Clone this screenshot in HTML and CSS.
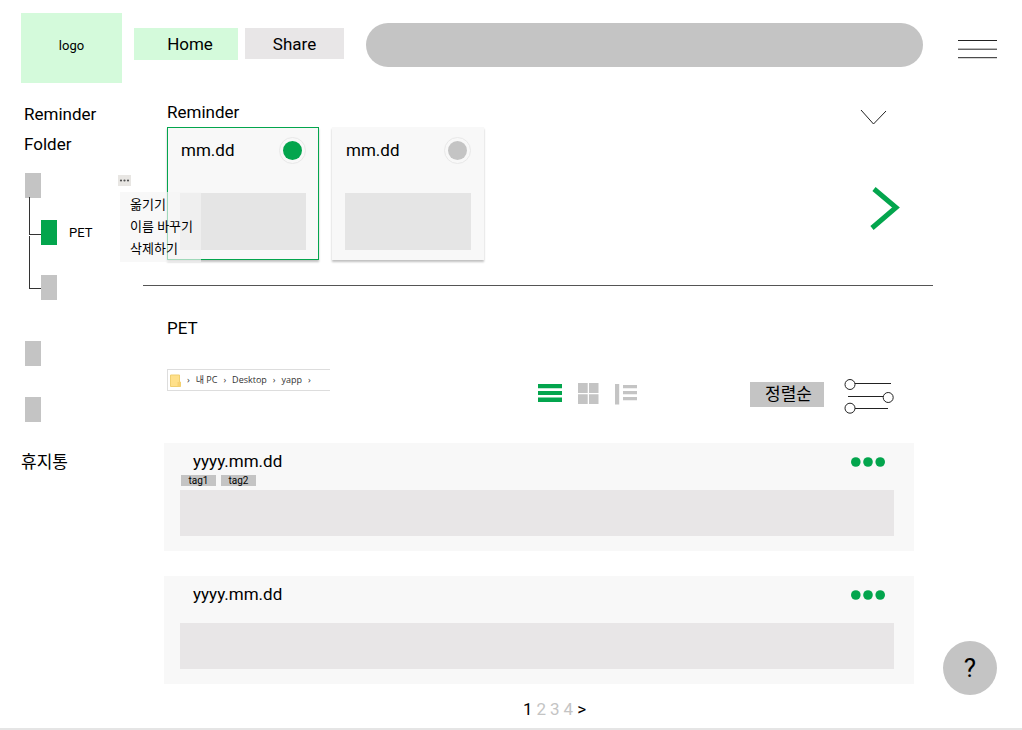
FILE: index.html
```
<!DOCTYPE html>
<html lang="ko">
<head>
    <meta charset="UTF-8">
    <meta name="viewport" content="width=device-width, initial-scale=1.0">
    <title>Reminder</title>
    <link rel="stylesheet" href="styles.css">
</head>
<body>
    <header class="header">
        <a class="logo" href="#">logo</a>
        <nav class="tabs">
            <a class="tab active" href="#">Home</a>
            <a class="tab" href="#">Share</a>
        </nav>
        <input class="search" type="search" aria-label="Search">
        <button class="menu-button" aria-label="Menu">
            <svg width="39" height="19" viewBox="0 0 39 19" stroke="#222" stroke-width="1">
                <path d="M0 .5H39M0 9.2H39M0 17.7H39"/>
            </svg>
        </button>
    </header>

    <div class="layout">
        <!-- Sidebar -->
        <aside class="sidebar">
            <a class="side-link" href="#">Reminder</a>
            <a class="side-link" href="#">Folder</a>
            <ul class="tree">
                <li class="root">
                    <div class="folder-row">
                        <span class="folder"></span>
                        <button class="more" aria-label="More">
                            <svg width="13" height="11" viewBox="0 0 13 11" fill="#555">
                                <circle cx="3" cy="5.5" r="1.1"/><circle cx="6.5" cy="5.5" r="1.1"/><circle cx="10" cy="5.5" r="1.1"/>
                            </svg>
                        </button>
                        <div class="popup">
                            <button class="popup-item">옮기기</button>
                            <button class="popup-item">이름 바꾸기</button>
                            <button class="popup-item">삭제하기</button>
                        </div>
                    </div>
                    <ul class="children">
                        <li class="child"><span class="folder green"></span>PET</li>
                        <li class="child"><span class="folder"></span></li>
                    </ul>
                </li>
                <li class="root"><span class="folder"></span></li>
                <li class="root"><span class="folder"></span></li>
            </ul>
            <a class="trash" href="#">휴지통</a>
        </aside>

        <main class="main">
            <section class="reminders">
                <div class="section-head">
                    <h2 class="title">Reminder</h2>
                    <button class="fold" aria-label="Fold">
                        <svg width="27" height="16" viewBox="0 0 27 16" fill="none" stroke="#222">
                            <path d="M1 1L13.5 15L26 2"/>
                        </svg>
                    </button>
                </div>
                <div class="cards">
                    <article class="card selected">
                        <div class="card-head">
                            <h3 class="title">mm.dd</h3>
                            <input class="check" type="radio" name="card" aria-label="mm.dd" checked>
                        </div>
                        <div class="card-box"></div>
                    </article>
                    <article class="card">
                        <div class="card-head">
                            <h3 class="title">mm.dd</h3>
                            <input class="check" type="radio" name="card" aria-label="mm.dd">
                        </div>
                        <div class="card-box"></div>
                    </article>
                    <button class="next" aria-label="Next">
                        <svg width="30" height="44" viewBox="0 0 30 44" fill="none" stroke="#03a54d" stroke-width="5">
                            <path d="M4 3L26 21.5L2 42"/>
                        </svg>
                    </button>
                </div>
            </section>

            <section>
                <h2 class="title folder-title">PET</h2>
                <div class="toolbar">
                    <nav class="path" aria-label="Path">
                        <svg width="11" height="13" viewBox="0 0 11 13">
                            <path d="M.5 1H9.5V8H10.5V12.5H.5Z" fill="#ffe08a" stroke="#f0cf70"/>
                            <path d="M7.5 8H10.5V12.5H7.5Z" fill="#f7d273"/>
                        </svg>
                        <span class="sep">›</span><a href="#">내 PC</a>
                        <span class="sep">›</span><a href="#">Desktop</a>
                        <span class="sep">›</span><a href="#">yapp</a>
                        <span class="sep">›</span>
                    </nav>
                    <div class="views">
                        <button aria-label="List">
                            <svg width="24" height="22" viewBox="0 0 24 22" fill="#03a54d">
                                <path d="M0 1H24V5.3H0ZM0 8H24V12H0ZM0 14.5H24V19H0Z"/>
                            </svg>
                        </button>
                        <button aria-label="Grid">
                            <svg width="21" height="22" viewBox="0 0 21 22" fill="#c4c4c4">
                                <path d="M0 0H9.7V10H0ZM11 0H20.5V10H11ZM0 11.3H9.7V21H0ZM11 11.3H20.5V21H11Z"/>
                            </svg>
                        </button>
                        <button aria-label="Timeline">
                            <svg width="22" height="22" viewBox="0 0 22 22" fill="#c4c4c4">
                                <path d="M0 1H4.2V21.5H0ZM8 2H22V5.2H8ZM8 8H22V11.2H8ZM8 14H22V17.2H8Z"/>
                            </svg>
                        </button>
                    </div>
                    <select class="sort" aria-label="정렬">
                        <option>정렬순</option>
                    </select>
                    <button class="filter" aria-label="Filter">
                        <svg width="50" height="36" viewBox="0 0 50 36" fill="none" stroke="#222">
                            <path d="M11 5.5H47M4 18.5H39M11 30.5H44"/>
                            <circle cx="6" cy="6.5" r="5"/>
                            <circle cx="44.2" cy="19.5" r="5"/>
                            <circle cx="6" cy="30.2" r="5"/>
                        </svg>
                    </button>
                </div>

                <div class="list">
                    <article class="item">
                        <div class="item-head">
                            <h3 class="title">yyyy.mm.dd</h3>
                            <button class="dots" aria-label="More">
                                <svg width="34" height="10" viewBox="0 0 34 10" fill="#03a54d">
                                    <circle cx="4.8" cy="5" r="4.8"/><circle cx="17" cy="5" r="4.8"/><circle cx="29.2" cy="5" r="4.8"/>
                                </svg>
                            </button>
                        </div>
                        <div class="tags">
                            <span class="tag">tag1</span>
                            <span class="tag">tag2</span>
                        </div>
                        <div class="item-box"></div>
                    </article>
                    <article class="item">
                        <div class="item-head">
                            <h3 class="title">yyyy.mm.dd</h3>
                            <button class="dots" aria-label="More">
                                <svg width="34" height="10" viewBox="0 0 34 10" fill="#03a54d">
                                    <circle cx="4.8" cy="5" r="4.8"/><circle cx="17" cy="5" r="4.8"/><circle cx="29.2" cy="5" r="4.8"/>
                                </svg>
                            </button>
                        </div>
                        <div class="tags"></div>
                        <div class="item-box"></div>
                    </article>
                </div>

                <nav class="pages" aria-label="Pages">
                    <a class="current" href="#">1</a>
                    <a href="#">2</a>
                    <a href="#">3</a>
                    <a href="#">4</a>
                    <a class="current" href="#">&gt;</a>
                </nav>
            </section>
        </main>
    </div>

    <button class="help">?</button>
</body>
</html>
```
FILE: styles.css
```
* {
    box-sizing: border-box;
}
body {
    margin: 0;
    min-height: 100vh;
    background-color: #fff;
    border-bottom: 2px solid #e5e5e5;
    color: #000;
    font-family: Roboto, "Noto Sans CJK KR", sans-serif;
    font-size: 17px;
    line-height: 20px;
}
a {
    color: inherit;
    text-decoration: none;
}
button {
    padding: 0;
    border: none;
    background: none;
    color: inherit;
    font: inherit;
    cursor: pointer;
}
svg {
    display: block;
}
ul {
    margin: 0;
    padding: 0;
    list-style: none;
}
.title {
    margin: 0;
    font-size: 17px;
    font-weight: 400;
}

/* Header */
.header {
    display: flex;
    align-items: flex-start;
    padding: 13px 25px 0 21px;
}
.logo {
    display: flex;
    align-items: center;
    justify-content: center;
    width: 101px;
    height: 70px;
    padding-bottom: 5px;
    background-color: #d4fadb;
    font-size: 13px;
}
.tabs {
    display: flex;
    align-items: flex-start;
    gap: 7px;
    margin: 15px 22px 0 12px;
}
.tab {
    width: 99px;
    height: 31px;
    background-color: #e8e6e7;
    line-height: 32px;
    text-align: center;
}
.tab.active {
    width: 104px;
    height: 32px;
    padding-left: 8px;
    background-color: #d4fadb;
}
.search {
    flex: 1;
    min-width: 0;
    height: 44px;
    margin-top: 10px;
    padding: 0 22px;
    border: none;
    border-radius: 22px;
    background-color: #c4c4c4;
    font: inherit;
}
.menu-button {
    margin: 27px 0 0 35px;
}

.layout {
    display: flex;
}

/* Sidebar */
.sidebar {
    width: 143px;
    padding: 21px 12px 0 24px;
}
.side-link {
    display: block;
    margin-bottom: 10px;
}
.folder {
    display: block;
    width: 16px;
    height: 25px;
    background-color: #c4c4c4;
}
.folder.green {
    background-color: #03a54d;
}
.tree {
    display: flex;
    flex-direction: column;
    gap: 31px;
    padding: 9px 0 30px 1px;
}
.folder-row {
    position: relative;
    display: flex;
    justify-content: space-between;
    align-items: flex-start;
}
.more {
    margin-top: 2px;
    background-color: #e8e6e3;
}
.popup {
    position: absolute;
    top: 19px;
    left: 95px;
    z-index: 1;
    display: flex;
    flex-direction: column;
    align-items: flex-start;
    width: 81px;
    padding: 2px 10px;
    background-color: rgba(245, 245, 245, 0.65);
}
.popup-item {
    font-size: 13px;
    line-height: 22px;
    white-space: nowrap;
}
.children {
    padding: 0 0 10px 16px;
}
.child {
    position: relative;
    display: flex;
    align-items: center;
    gap: 12px;
    height: 25px;
    margin-top: 22px;
    font-size: 13px;
}
.child + .child {
    margin-top: 30px;
}
/* elbow line from the parent folder */
.child::before {
    content: "";
    position: absolute;
    left: -12px;
    bottom: 10px;
    width: 11px;
    height: 37px;
    border-left: 1px solid #333;
    border-bottom: 1px solid #333;
}
.child + .child::before {
    bottom: 11px;
    height: 52px;
}
.trash {
    margin-left: -3px;
}

/* Reminder */
.main {
    flex: 1;
    min-width: 0;
    margin-right: 89px;
}
.reminders {
    padding: 19px 0 25px 24px;
    border-bottom: 1px solid #555;
}
.section-head {
    display: flex;
    justify-content: space-between;
    align-items: flex-end;
    height: 20px;
    padding-right: 46px;
}
.fold {
    align-self: center;
    padding-top: 10px;
}
.cards {
    display: flex;
    gap: 13px;
    margin-top: 5px;
    padding-right: 33px;
}
.card {
    width: 152px;
    padding: 9px 12px;
    border: 1px solid #f8f8f8;
    background-color: #f8f8f8;
    box-shadow: 0 2px 2px rgba(0, 0, 0, 0.25);
}
.card.selected {
    border-color: #03a54d;
}
.card-head {
    display: flex;
    justify-content: space-between;
    align-items: center;
    padding-left: 1px;
}
.card .title {
    padding-bottom: 2px;
}
.check {
    appearance: none;
    width: 27px;
    height: 27px;
    margin: 0;
    border: 1px solid #e8e8e8;
    border-radius: 50%;
    padding: 3px;
    background-color: #c4c4c4;
    background-clip: content-box;
}
.check:checked {
    background-color: #03a54d;
}
.card-box {
    height: 57px;
    margin-top: 29px;
    background-color: #e5e5e5;
}
.next {
    align-self: flex-start;
    margin: 59px 0 0 auto;
}

/* Folder content */
.folder-title {
    margin: 32px 24px 31px;
}
.toolbar {
    display: flex;
    align-items: flex-start;
    padding: 0 39px 0 24px;
}
.path {
    display: flex;
    align-items: center;
    gap: 6px;
    width: 163px;
    height: 22px;
    padding-left: 2px;
    border: 1px solid #ddd;
    border-right: none;
    color: #333;
    font-family: "Open Sans", "Noto Sans CJK KR", sans-serif;
    font-size: 9px;
}
.views {
    display: flex;
    gap: 16px;
    margin: 14px 113px 0 auto;
}
.sort {
    appearance: none;
    width: 74px;
    height: 25px;
    margin: 13px 20px 0 0;
    padding: 0 0 2px 15px;
    border: none;
    border-radius: 0;
    background-color: #c4c4c4;
    color: #000;
    font: inherit;
}
.filter {
    margin-top: 9px;
}
.list {
    display: flex;
    flex-direction: column;
    gap: 25px;
    padding: 29px 19px 0 21px;
}
.item {
    padding: 8px 20px 15px 16px;
    background-color: #f8f8f8;
}
.item-head {
    display: flex;
    justify-content: space-between;
    align-items: center;
    padding: 0 9px 0 13px;
}
.dots {
    padding-top: 2px;
}
.tags {
    display: flex;
    gap: 5px;
    height: 11px;
    margin: 4px 0;
    padding-left: 1px;
}
.tag {
    width: 35px;
    background-color: #c4c4c4;
    font-size: 10px;
    line-height: 11px;
    text-align: center;
}
.item-box {
    height: 46px;
    background-color: #e8e6e7;
}
.pages {
    display: flex;
    justify-content: center;
    gap: 4px;
    padding: 15px 0 0 33px;
    color: #c4c4c4;
}
.pages .current {
    color: #000;
}

.help {
    position: fixed;
    right: 25px;
    bottom: 35px;
    width: 54px;
    height: 54px;
    border-radius: 50%;
    background-color: #c4c4c4;
    font-size: 26px;
}
```
